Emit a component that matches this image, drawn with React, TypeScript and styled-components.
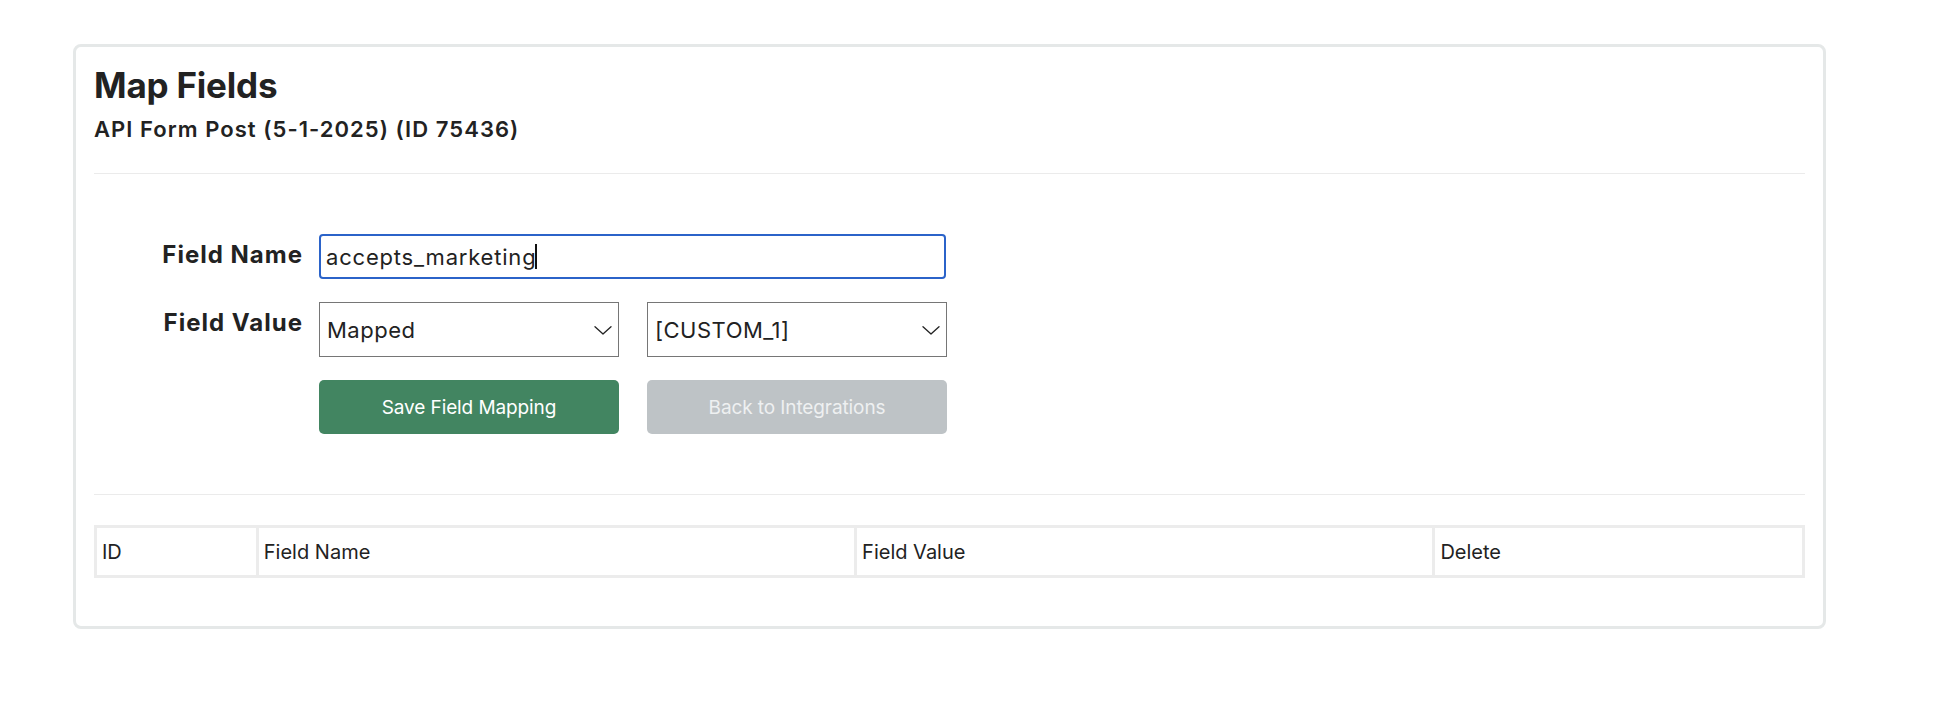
import React from "react";
import styled, { createGlobalStyle } from "styled-components";

const FONT = `"Inter", "Liberation Sans", sans-serif`;

const GlobalStyle = createGlobalStyle`
  html, body { margin: 0; padding: 0; background: #ffffff; }
  body { font-family: ${FONT}; color: #222222; }
  * { box-sizing: border-box; }
`;

const Page = styled.div`
  padding: 44px 0 40px 73px;
`;

const Card = styled.section`
  width: 1753px;
  border: 3px solid #e5e8e8;
  border-radius: 8px;
  padding: 17px 18px 48px 18px;
  background: #fff;
`;

const Title = styled.h1`
  margin: 0;
  font-size: 35px;
  line-height: 42px;
  font-weight: 700;
  color: #222;
  letter-spacing: -0.2px;
`;

const Subtitle = styled.h2`
  margin: 10px 0 0 0;
  font-size: 22px;
  line-height: 27px;
  font-weight: 600;
  color: #222;
  letter-spacing: 1.05px;
`;

const Divider = styled.hr<{ $top: number; $bottom: number }>`
  border: 0;
  border-top: 1px solid #ebebeb;
  margin: ${(p) => p.$top}px 0 ${(p) => p.$bottom}px 0;
`;

const Form = styled.form`
  display: grid;
  grid-template-columns: 209px 627px;
  column-gap: 16px;
  row-gap: 23px;
  align-items: start;
`;

const Label = styled.label`
  text-align: right;
  font-size: 24px;
  line-height: 29px;
  font-weight: 700;
  color: #222;
  padding-top: 6px;
  letter-spacing: 1px;
`;

const InputBox = styled.div`
  position: relative;
  height: 45px;
`;

const TextInput = styled.input`
  width: 100%;
  height: 100%;
  border: 2px solid #2b63c9;
  border-radius: 4px;
  padding: 0 5px;
  font-family: ${FONT};
  font-size: 22px;
  letter-spacing: 0.8px;
  color: #222;
  outline: none;
  caret-color: transparent;
`;

const Caret = styled.span`
  position: absolute;
  left: 216px;
  top: 10px;
  width: 1.5px;
  height: 25px;
  background: #111;
  pointer-events: none;
`;

const Pair = styled.div`
  display: grid;
  grid-template-columns: 300px 300px;
  column-gap: 28px;
`;

const SelectWrap = styled.div`
  position: relative;
  height: 55px;
`;

const Select = styled.select`
  appearance: none;
  -webkit-appearance: none;
  width: 100%;
  height: 100%;
  border: 1px solid #767676;
  border-radius: 0;
  background: #fff;
  padding: 0 30px 0 7px;
  font-family: ${FONT};
  font-size: 22px;
  letter-spacing: 0.5px;
  color: #222;
  outline: none;
`;

const Chevron = styled.svg`
  position: absolute;
  right: 7px;
  top: 24px;
  width: 18px;
  height: 9px;
  pointer-events: none;
`;

const Button = styled.button<{ $variant: "primary" | "muted" }>`
  height: 54px;
  border: 0;
  border-radius: 5px;
  font-family: ${FONT};
  font-size: 19px;
  font-weight: 400;
  letter-spacing: -0.1px;
  color: ${(p) => (p.$variant === "primary" ? "#ffffff" : "#eef0f1")};
  background: ${(p) => (p.$variant === "primary" ? "#428561" : "#bec3c6")};
  cursor: pointer;
`;

const Table = styled.table`
  width: 100%;
  border-collapse: collapse;
  border: 3px solid #ececec;
`;

const Th = styled.th<{ $w: number }>`
  width: ${(p) => p.$w}px;
  border: 3px solid #ececec;
  height: 50px;
  padding: 0 5px;
  text-align: left;
  font-size: 20px;
  font-weight: 400;
  color: #222;
`;

function SelectBox({ value, options }: { value: string; options: string[] }) {
  return (
    <SelectWrap>
      <Select defaultValue={value}>
        {options.map((o) => (
          <option key={o} value={o}>
            {o}
          </option>
        ))}
      </Select>
      <Chevron viewBox="0 0 18 9" fill="none">
        <path d="M1 0.8 L9 8 L17 0.8" stroke="#222" strokeWidth="1.3" strokeLinecap="round" strokeLinejoin="round" />
      </Chevron>
    </SelectWrap>
  );
}

export default function App() {
  return (
    <>
      <GlobalStyle />
      <Page>
        <Card>
          <Title>Map Fields</Title>
          <Subtitle>API Form Post (5-1-2025) (ID 75436)</Subtitle>
          <Divider $top={30} $bottom={60} />
          <Form onSubmit={(e) => e.preventDefault()}>
            <Label htmlFor="fieldName">Field Name</Label>
            <InputBox>
              <TextInput id="fieldName" defaultValue="accepts_marketing" />
              <Caret />
            </InputBox>
            <Label>Field Value</Label>
            <Pair>
              <SelectBox value="Mapped" options={["Mapped", "Static"]} />
              <SelectBox value="[CUSTOM_1]" options={["[CUSTOM_1]", "[CUSTOM_2]"]} />
            </Pair>
            <span />
            <Pair>
              <Button $variant="primary" type="submit">Save Field Mapping</Button>
              <Button $variant="muted" type="button">Back to Integrations</Button>
            </Pair>
          </Form>
          <Divider $top={60} $bottom={30} />
          <Table>
            <thead>
              <tr>
                <Th $w={162}>ID</Th>
                <Th $w={599}>Field Name</Th>
                <Th $w={579}>Field Value</Th>
                <Th $w={370}>Delete</Th>
              </tr>
            </thead>
          </Table>
        </Card>
      </Page>
    </>
  );
}
